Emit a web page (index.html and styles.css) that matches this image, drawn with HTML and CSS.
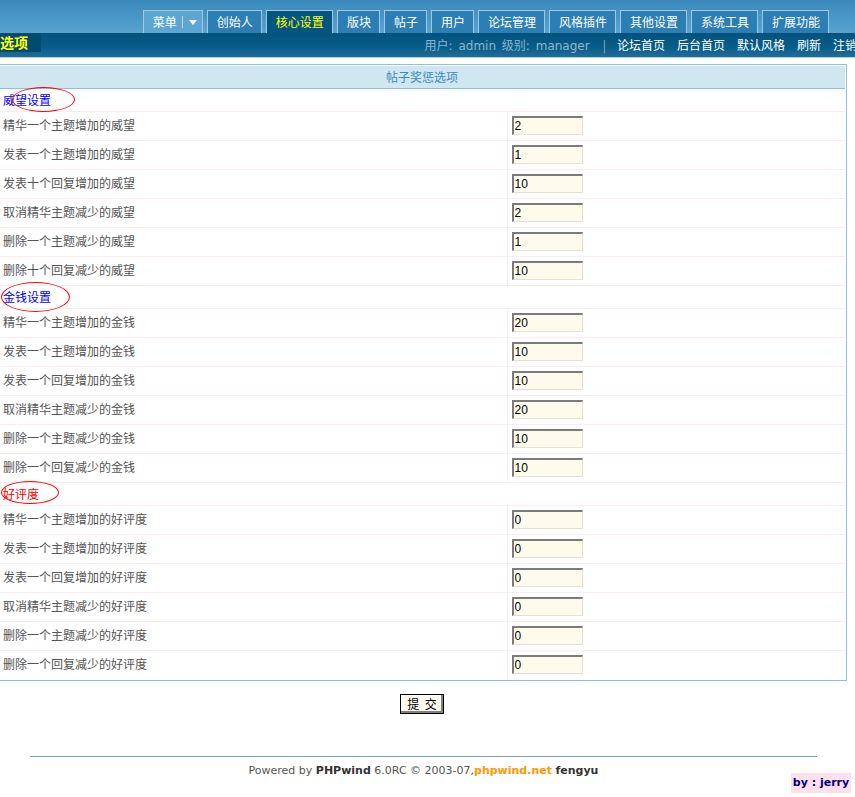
FILE: index.html
```html
<!DOCTYPE html>
<html lang="zh-CN">
<head>
    <meta charset="UTF-8">
    <title>帖子奖惩选项</title>
    <link rel="stylesheet" href="styles.css">
</head>
<body>
    <div class="head">
        <div class="topbar">
            <ul class="tabs">
                <li class="tab menu">菜单<span class="sep"></span><span class="arrow"></span></li>
                <li class="tab">创始人</li>
                <li class="tab on">核心设置</li>
                <li class="tab">版块</li>
                <li class="tab">帖子</li>
                <li class="tab">用户</li>
                <li class="tab">论坛管理</li>
                <li class="tab">风格插件</li>
                <li class="tab">其他设置</li>
                <li class="tab">系统工具</li>
                <li class="tab">扩展功能</li>
            </ul>
        </div>
        <div class="navbar">
            <div class="title">选项</div>
            <div class="userinfo">用户: admin 级别: manager</div>
            <span class="pipe">|</span>
            <div class="links">
                <a href="#">论坛首页</a>
                <a href="#">后台首页</a>
                <a href="#">默认风格</a>
                <a href="#">刷新</a>
                <a href="#">注销</a>
            </div>
        </div>
    </div>

    <div class="main">
        <form class="box">
            <table class="t">
                <tr class="thead"><td colspan="2">帖子奖惩选项</td></tr>

                <tr class="sec"><td colspan="2"><span class="blue">威望设置</span><span class="ring ring-a"></span></td></tr>
                <tr><td class="label">精华一个主题增加的威望</td><td class="field"><input type="text" value="2"></td></tr>
                <tr><td class="label">发表一个主题增加的威望</td><td class="field"><input type="text" value="1"></td></tr>
                <tr><td class="label">发表十个回复增加的威望</td><td class="field"><input type="text" value="10"></td></tr>
                <tr><td class="label">取消精华主题减少的威望</td><td class="field"><input type="text" value="2"></td></tr>
                <tr><td class="label">删除一个主题减少的威望</td><td class="field"><input type="text" value="1"></td></tr>
                <tr><td class="label">删除十个回复减少的威望</td><td class="field"><input type="text" value="10"></td></tr>

                <tr class="sec"><td colspan="2"><span class="blue">金钱设置</span><span class="ring ring-b"></span></td></tr>
                <tr><td class="label">精华一个主题增加的金钱</td><td class="field"><input type="text" value="20"></td></tr>
                <tr><td class="label">发表一个主题增加的金钱</td><td class="field"><input type="text" value="10"></td></tr>
                <tr><td class="label">发表一个回复增加的金钱</td><td class="field"><input type="text" value="10"></td></tr>
                <tr><td class="label">取消精华主题减少的金钱</td><td class="field"><input type="text" value="20"></td></tr>
                <tr><td class="label">删除一个主题减少的金钱</td><td class="field"><input type="text" value="10"></td></tr>
                <tr><td class="label">删除一个回复减少的金钱</td><td class="field"><input type="text" value="10"></td></tr>

                <tr class="sec"><td colspan="2"><span class="red">好评度</span><span class="ring ring-c"></span></td></tr>
                <tr><td class="label">精华一个主题增加的好评度</td><td class="field"><input type="text" value="0"></td></tr>
                <tr><td class="label">发表一个主题增加的好评度</td><td class="field"><input type="text" value="0"></td></tr>
                <tr><td class="label">发表一个回复增加的好评度</td><td class="field"><input type="text" value="0"></td></tr>
                <tr><td class="label">取消精华主题减少的好评度</td><td class="field"><input type="text" value="0"></td></tr>
                <tr><td class="label">删除一个主题减少的好评度</td><td class="field"><input type="text" value="0"></td></tr>
                <tr class="last"><td class="label">删除一个回复减少的好评度</td><td class="field"><input type="text" value="0"></td></tr>
            </table>
        </form>
        <div class="submit-row">
            <button type="button" class="btn">提&nbsp;交</button>
        </div>
    </div>

    <div class="foot">
        <p class="powered">Powered by <b class="dark">PHPwind</b> 6.0RC &copy; 2003-07,<b class="orange">phpwind.net</b> <b class="dark">fengyu</b></p>
        <div class="byline">by : jerry</div>
    </div>
</body>
</html>
```

FILE: styles.css
```css
*{margin:0;padding:0;box-sizing:border-box;}
html{
    overflow:hidden;
}
body{
    background:#fff;
    color:#555;
    font:12px "Noto Sans CJK SC", sans-serif;
}

/* top header */
.head{
    width:870px;
}
.topbar{
    height:33px;
    background:linear-gradient(180deg,#3a88b9,#4f9dcb 70%,#5aa3cf);
    padding-right:41px;
    display:flex;
    align-items:flex-end;
    justify-content:flex-end;
}
.tabs{
    list-style:none;
    display:flex;
    gap:4px;
}
.tab{
    height:23px;
    padding:0 8px 0 9px;
    border:1px solid #9fc9e2;
    border-bottom:none;
    background:#2d7eb2;
    color:#fff;
    line-height:22px;
    white-space:nowrap;
    display:flex;
    align-items:center;
}
.tab.on{
    background:#045580;
    color:#ffff00;
}
.tab.menu{
    background:#5ea6d2;
    padding-right:5px;
}
.tab .sep{
    width:1px;
    height:12px;
    background:#b9d8ec;
    margin:0 6px 0 5px;
}
.tab .arrow{
    width:0;height:0;
    border-left:4px solid transparent;
    border-right:4px solid transparent;
    border-top:5px solid #fff;
}

.navbar{
    height:25px;
    background:linear-gradient(180deg,#02527d,#0a5d89 60%,#206e99);
    border-bottom:1px solid #b5d0e0;
    display:flex;
    align-items:center;
    padding-bottom:1px;
    white-space:nowrap;
}
.navbar .title{
    align-self:flex-start;
    width:41px;
    height:19px;
    background:#034a72;
    color:#ffff00;
    font-size:14px;
    font-weight:bold;
    line-height:18px;
}
.userinfo{
    margin-left:auto;
    color:#8eb6cf;
    font-family:"DejaVu Sans","Noto Sans CJK SC",sans-serif;
    font-size:12px;
    word-spacing:2px;
}
.pipe{
    color:#8eb6cf;
    margin:0 11px 0 13px;
}
.links{
    display:flex;
    gap:12px;
    padding-right:13px;
}
.links a{
    color:#fff;
    text-decoration:none;
}

/* settings table */
.main{
    width:850px;
    margin:6px 0 0 -3px;
}
.box{
    border:1px solid #8fc1de;
    padding:1px;
}
.t{
    width:100%;
    border-collapse:collapse;
}
.t td{
    padding:0 4px;
    border-bottom:1px solid #fdecec;
}
.thead td{
    height:22px;
    background:#d0e6f1;
    border-bottom:1px solid #8fc1de;
    color:#3a8cc0;
    text-align:center;
}
.sec td{
    height:23px;
    position:relative;
}
.t .label{
    width:508px;
    height:29px;
    padding-bottom:2px;
    border-right:1px solid #fdecec;
}
.t .last td{
    border-bottom:none;
}
.field{
    padding-left:3px;
}
.field input{
    display:block;
    width:71px;
    height:19px;
    border-style:solid;
    border-width:2px 1px 1px 2px;
    border-color:#7b7b7b #e4e1d3 #e4e1d3 #7b7b7b;
    background:#fffbec;
    color:#000;
    font:12px "Liberation Sans", sans-serif;
    padding:0 1px;
    outline:none;
}
.blue{color:#0000ff;}
.red{color:#ff0000;}

/* hand-drawn marks around the section names */
.ring{
    position:absolute;
    border:1px solid #ff0000;
    border-radius:50%;
}
.ring-a{left:13px;top:-2px;width:63px;height:25px;}
.ring-b{left:2px;top:-4px;width:69px;height:30px;}
.ring-c{left:2px;top:-2px;width:58px;height:23px;}

.submit-row{
    margin-top:13px;
    text-align:center;
}
.btn{
    width:44px;
    height:20px;
    border:1px solid #000;
    background:#fffbef;
    box-shadow:inset -2px -2px 0 #808080, inset 1px 1px 0 #fff;
    color:#000;
    font:12px "Noto Sans CJK SC", sans-serif;
    line-height:16px;
    word-spacing:3px;
    padding-bottom:1px;
}

/* footer */
.foot{
    width:787px;
    margin:42px 0 0 30px;
    border-top:1px solid #7f9fd3;
    padding:6px 0 3px;
    font:11px/16px "DejaVu Sans", sans-serif;
    color:#555;
}
.powered{
    text-align:center;
}
.foot .dark{color:#333;}
.foot .orange{color:#ff9900;}
.byline{
    width:60px;
    height:20px;
    margin:-6px 0 0 761px;
    background:#fde0ec;
    color:#000080;
    font:bold 11px/20px "DejaVu Sans", sans-serif;
    text-align:center;
}
```
